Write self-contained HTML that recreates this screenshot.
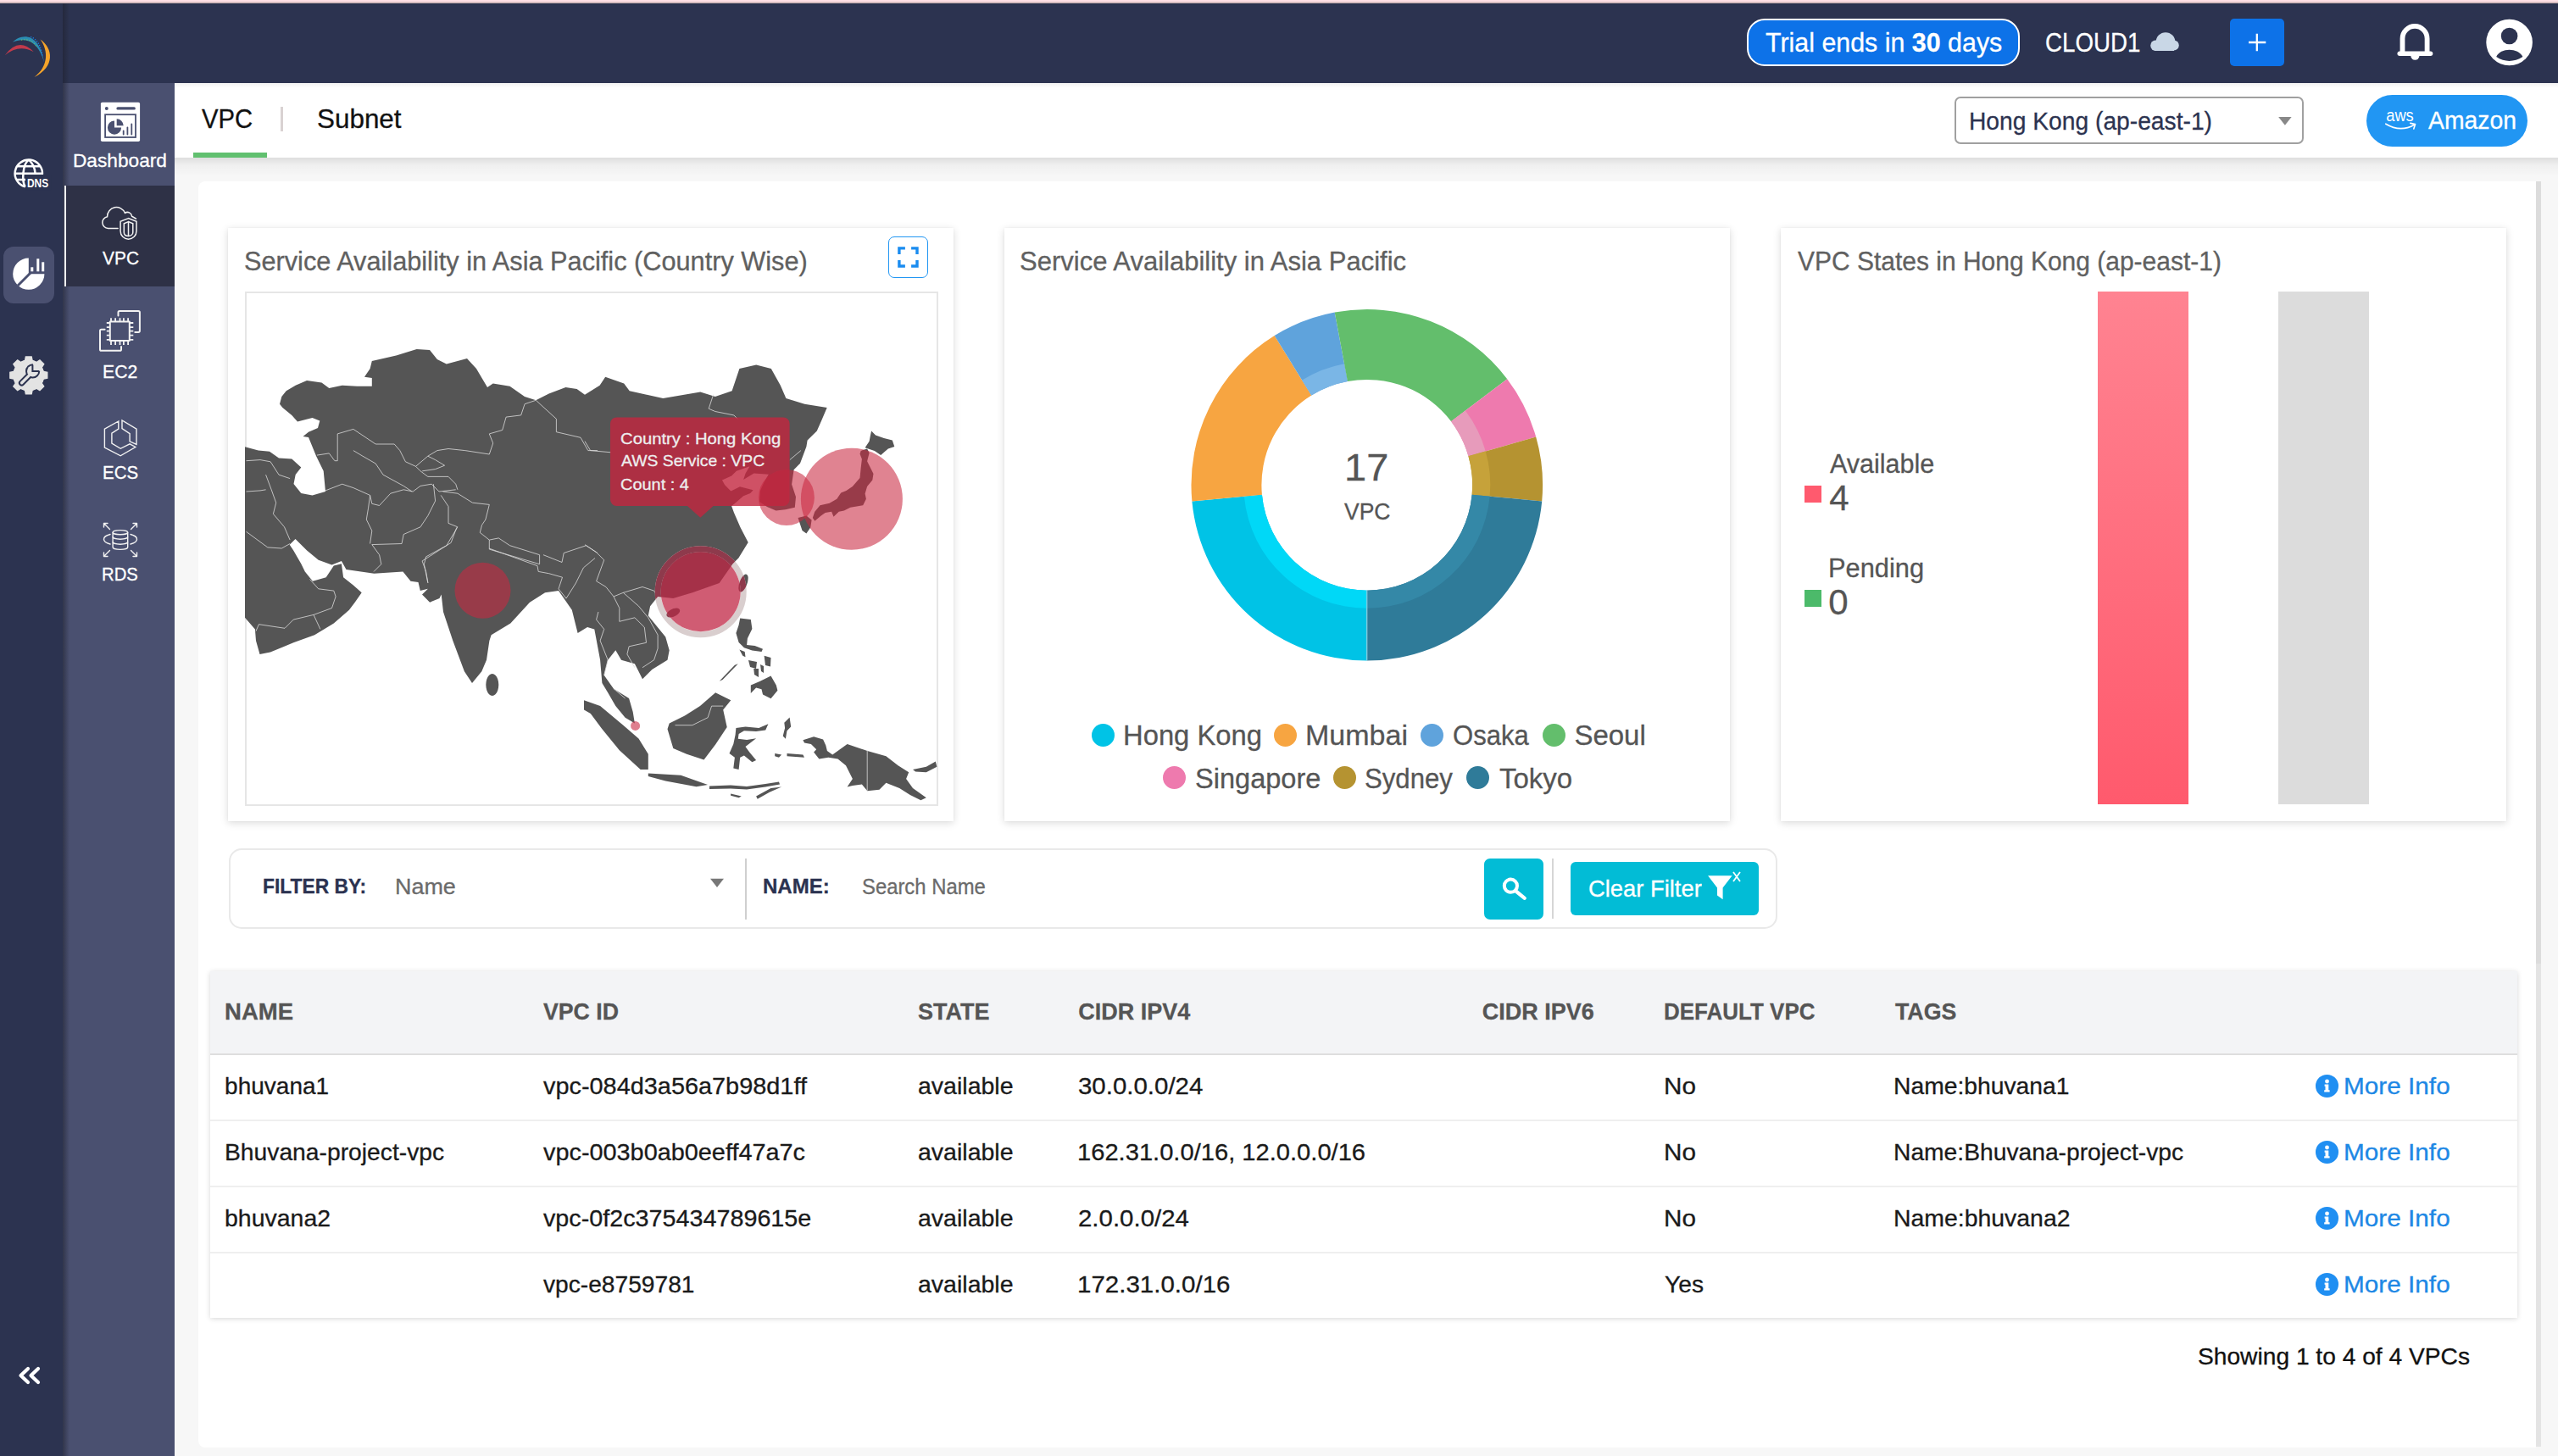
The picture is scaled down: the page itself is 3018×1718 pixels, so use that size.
<!DOCTYPE html>
<html><head><meta charset="utf-8"><style>
*{margin:0;padding:0;box-sizing:border-box}
html,body{width:3018px;height:1718px;overflow:hidden;background:#f7f7f7;font-family:"Liberation Sans",sans-serif}
.a{position:absolute}
.t{position:absolute;line-height:1;white-space:pre;font-family:"Liberation Sans",sans-serif;-webkit-text-stroke:0.3px currentColor}
svg{position:absolute;overflow:visible}
</style></head>
<body>
<div class="a" style="left:0px;top:0px;width:3018px;height:3px;background:#ffe0e6"></div><div class="a" style="left:0px;top:2px;width:3018px;height:2px;background:#d6bcc0"></div><div class="a" style="left:0px;top:4px;width:3018px;height:94px;background:#2c3350"></div><div class="a" style="left:0px;top:4px;width:3018px;height:1px;background:#222b45"></div><div class="a" style="left:0px;top:98px;width:74px;height:1620px;background:#2c3350"></div><div class="a" style="left:74px;top:98px;width:132px;height:1620px;background:#4a5070"></div><div class="a" style="left:74px;top:4px;width:8px;height:1714px;background:linear-gradient(to right,rgba(30,32,45,0.55),rgba(30,32,45,0))"></div><div class="a" style="left:76px;top:219px;width:130px;height:119px;background:#2e3146"></div><div class="a" style="left:76px;top:219px;width:2px;height:119px;background:#f0f0f0"></div><div class="a" style="left:4px;top:291px;width:60px;height:67px;background:#4a5070;border-radius:12px"></div><div class="a" style="left:206px;top:98px;width:2812px;height:88px;background:#fff"></div><div class="a" style="left:206px;top:186px;width:2812px;height:22px;background:linear-gradient(to bottom,rgba(0,0,0,0.10),rgba(0,0,0,0.03) 40%,rgba(0,0,0,0))"></div><div class="a" style="left:206px;top:98px;width:2812px;height:6px;background:linear-gradient(to bottom,rgba(0,0,0,0.05),rgba(0,0,0,0))"></div><div class="a" style="left:228px;top:180px;width:87px;height:6px;background:#61c06f"></div><div class="a" style="left:331px;top:126px;width:3px;height:29px;background:#d9d2d2"></div><div class="a" style="left:234px;top:214px;width:2758px;height:1494px;background:#fff;border-radius:8px 0 0 8px"></div><div class="a" style="left:2992px;top:214px;width:6px;height:923px;background:#dcdcdc"></div><div class="a" style="left:2992px;top:1137px;width:6px;height:570px;background:#e4e4e4"></div><div class="a" style="left:269px;top:269px;width:856px;height:700px;background:#fff;box-shadow:0 2px 9px rgba(0,0,0,0.15),0 0 2px rgba(0,0,0,0.05)"></div><div class="a" style="left:1185px;top:269px;width:856px;height:700px;background:#fff;box-shadow:0 2px 9px rgba(0,0,0,0.15),0 0 2px rgba(0,0,0,0.05)"></div><div class="a" style="left:2101px;top:269px;width:856px;height:700px;background:#fff;box-shadow:0 2px 9px rgba(0,0,0,0.15),0 0 2px rgba(0,0,0,0.05)"></div><div class="a" style="left:289px;top:344px;width:818px;height:607px;border:2px solid #e6e6e6"></div><div class="a" style="left:1048px;top:279px;width:47px;height:49px;border:1.5px solid #2196f3;border-radius:7px"></div><div class="a" style="left:2306px;top:114px;width:412px;height:56px;border:2px solid #a0a0a0;border-radius:7px;background:#fff"></div><div class="a" style="left:2792px;top:112px;width:190px;height:61px;background:#2196f3;border-radius:31px"></div><div class="a" style="left:2061px;top:22px;width:322px;height:56px;background:#0d72e8;border:2px solid #fff;border-radius:21px"></div><div class="a" style="left:2631px;top:22px;width:64px;height:56px;background:#0d72e8;border-radius:5px"></div><div class="a" style="left:270px;top:1001px;width:1827px;height:95px;border:2px solid #e9e9e9;border-radius:15px;background:#fff"></div><div class="a" style="left:879px;top:1013px;width:2px;height:72px;background:#cfcfcf"></div><div class="a" style="left:1831px;top:1013px;width:2px;height:71px;background:#d6d6d6"></div><div class="a" style="left:1751px;top:1013px;width:70px;height:72px;background:#02bcd6;border-radius:7px"></div><div class="a" style="left:1853px;top:1017px;width:222px;height:63px;background:#02bcd6;border-radius:6px"></div><div class="a" style="left:248px;top:1146px;width:2722px;height:409px;background:#fff;box-shadow:0 1px 6px rgba(0,0,0,0.16)"></div><div class="a" style="left:248px;top:1146px;width:2722px;height:97px;background:#f3f4f6"></div><div class="a" style="left:248px;top:1243px;width:2722px;height:2px;background:#dedede"></div><div class="a" style="left:248px;top:1321px;width:2722px;height:2px;background:#efefef"></div><div class="a" style="left:248px;top:1399px;width:2722px;height:2px;background:#efefef"></div><div class="a" style="left:248px;top:1477px;width:2722px;height:2px;background:#efefef"></div><svg style="left:0px;top:35px" width="70" height="65" viewBox="0 35 70 65">
<path d="M5.8,65.2 Q22,43 39.8,61.2 Q22,51.5 5.8,65.2 Z" fill="#c23a4b"/>
<path d="M14.8,49.8 C25,39.5 46,37 52.2,74 C44.5,45 27,44.5 14.8,49.8 Z" fill="#2b8db3"/>
<path d="M36,43.5 C44,46 48,54 50,66" fill="none" stroke="#1a7ee8" stroke-width="1.3" stroke-dasharray="1.3 1.6"/>
<path d="M25,47.2 Q37,45 43,55" fill="none" stroke="#8ad04a" stroke-width="1" stroke-dasharray="1.2 2"/>
<path d="M47.5,46.5 C63,57 65,79 40.5,91 C57,78.5 57.5,60 47.5,46.5 Z" fill="#f5a42a"/>
</svg><svg style="left:10px;top:180px" width="54" height="48" viewBox="10 180 54 48">
<g fill="none" stroke="#fff" stroke-width="2.5">
<path d="M29.8,220.4 A16.2,16.2 0 1 1 50,205.5"/>
<path d="M33.9,188.6 C26.5,194 25.5,214 29.8,220.4"/>
<path d="M33.9,188.6 C40,193.5 41.2,199 41.6,205"/>
<path d="M20.5,196.2 H47.4"/>
<path d="M17.8,204.8 H51"/>
<path d="M19,212 H30"/>
</g>
<rect x="30.8" y="206.2" width="30" height="18" fill="#2c3350"/>
<text x="32" y="221" font-family="Liberation Sans" font-weight="700" font-size="15.5" fill="#fff" textLength="25.2" lengthAdjust="spacingAndGlyphs">DNS</text>
</svg><svg style="left:10px;top:300px" width="50" height="50" viewBox="10 300 50 50">
<path d="M33.8,304.6 V323.2 H52.4 A18.6,18.6 0 1 1 33.8,304.6 Z" fill="#fff"/>
<path d="M21,337 L37,321" stroke="#4a5070" stroke-width="3"/>
<rect x="36.3" y="315.3" width="3" height="5" fill="#fff"/>
<rect x="43.3" y="305.3" width="3" height="15" fill="#fff"/>
<rect x="49.2" y="309.3" width="3" height="11" fill="#fff"/>
</svg><svg style="left:5px;top:412px" width="59" height="60" viewBox="5 412 59 60">
<path d="M51.63,437.87 L56.46,438.85 L56.46,446.75 L51.63,447.73 L49.90,451.92 L52.62,456.03 L47.03,461.62 L42.92,458.90 L38.73,460.63 L37.75,465.46 L29.85,465.46 L28.87,460.63 L24.68,458.90 L20.57,461.62 L14.98,456.03 L17.70,451.92 L15.97,447.73 L11.14,446.75 L11.14,438.85 L15.97,437.87 L17.70,433.68 L14.98,429.57 L20.57,423.98 L24.68,426.70 L28.87,424.97 L29.85,420.14 L37.75,420.14 L38.73,424.97 L42.92,426.70 L47.03,423.98 L52.62,429.57 L49.90,433.68 Z" fill="#e3e3e3"/>
<circle cx="33.8" cy="442.8" r="18.5" fill="#e3e3e3"/>
<path d="M25.6,451.8 L34,443.4" stroke="#2c3350" stroke-width="7.4" stroke-linecap="round"/>
<circle cx="38.6" cy="437.9" r="8.6" fill="#2c3350"/>
<path d="M25.6,451.8 L34,443.4" stroke="#e3e3e3" stroke-width="3.4" stroke-linecap="round"/>
<circle cx="38.6" cy="437.9" r="6.6" fill="#e3e3e3"/>
<path d="M38.9,437.6 V428 H49 V437.6 Z" fill="#e3e3e3"/>
<path d="M38.4,430.4 V438 H46" fill="none" stroke="#2c3350" stroke-width="2"/>
</svg><svg style="left:15px;top:1605px" width="40" height="35" viewBox="15 1605 40 35">
<path d="M33,1615 L24.5,1623 L33,1631 M45,1615 L36.5,1623 L45,1631" fill="none" stroke="#fff" stroke-width="4.2" stroke-linecap="round" stroke-linejoin="round"/>
</svg><svg style="left:110px;top:110px" width="65" height="65" viewBox="110 110 65 65">
<rect x="118.9" y="120.7" width="46.2" height="46.4" rx="1.8" fill="#fff"/>
<circle cx="125.8" cy="127.9" r="2" fill="#4a5070"/>
<path d="M139,127.9 H158.3" stroke="#4a5070" stroke-width="3.2" stroke-linecap="round"/>
<rect x="124.1" y="135.2" width="35.9" height="26.8" fill="none" stroke="#4a5070" stroke-width="1.8"/>
<path d="M135,142.5 V150.6 H143.1 A8.1,8.1 0 1 1 135,142.5 Z" fill="#4a5070"/>
<path d="M137.7,140.3 A8,8 0 0 1 145.7,148.3 H137.7 Z" fill="#4a5070"/>
<path d="M145.7,154.3 V158.5 M150.4,150.3 V158.5 M155.3,146.3 V158.5" stroke="#4a5070" stroke-width="1.8" stroke-linecap="round"/>
</svg><svg style="left:110px;top:235px" width="65" height="55" viewBox="110 235 65 55">
<g fill="none" stroke="#f2f2f2" stroke-width="1.5" stroke-linecap="round">
<path d="M139.1,269.4 H127.5 A6.9,6.9 0 0 1 126.6,255.7 A10.8,10.8 0 0 1 147.4,251.3 A5.3,5.3 0 0 1 155.6,255.2 L160.4,258"/>
<path d="M151.5,257.6 L142.1,261.2 V272.5 C142.1,278 146,282 151.5,282.2 C157,282 161,278 161,272.5 V261.2 Z"/>
<path d="M151.5,261.6 L146.3,263.8 V274.2 C146.3,276.8 148.6,278.4 151.5,278.4 C154.4,278.4 156.8,276.8 156.8,274.2 V263.8 Z"/>
<path d="M151.5,261.6 V278.4"/>
</g>
</svg><svg style="left:110px;top:358px" width="65" height="65" viewBox="110 358 65 65">
<g fill="none" stroke="#f2f2f2" stroke-width="2" stroke-linecap="round" stroke-linejoin="round">
<rect x="129.8" y="379.6" width="23" height="22.5"/>
<path d="M131,375.2 V379.4 M131,402.2 V407 M136.1,375.2 V379.4 M136.1,402.2 V407 M141.5,375.2 V379.4 M141.5,402.2 V407 M145.9,375.2 V379.4 M145.9,402.2 V407 M151.1,375.2 V379.4 M151.1,402.2 V407 M125.8,381 H129.6 M152.9,381 H157.3 M125.8,386.1 H129.6 M152.9,386.1 H157.3 M125.8,390.6 H129.6 M152.9,390.6 H157.3 M125.8,395.7 H129.6 M152.9,395.7 H157.3 M125.8,400.9 H129.6 M152.9,400.9 H157.3 " stroke-width="1.8" stroke-linecap="butt"/>
<path d="M139.5,372.5 V368.5 Q139.5,366.9 141,366.9 H163.3 Q164.9,366.9 164.9,368.5 V390.3 Q164.9,391.9 163.3,391.9 H159.3"/>
<path d="M123.6,388.8 H119.6 Q118,388.8 118,390.4 V412.2 Q118,413.8 119.6,413.8 H141.4 Q143,413.8 143,412.2 V409"/>
</g>
</svg><svg style="left:115px;top:490px" width="55" height="55" viewBox="115 490 55 55">
<g fill="none" stroke="#f2f2f2" stroke-width="1.4" stroke-linejoin="miter">
<path d="M139.8,497 L123.4,506.2 V528.1 L142.2,537.8 L159.8,527.5 L153.1,523.8 L142.2,529.3 L131.9,523.2 V511.1 L139.8,506.2 Z"/>
<path d="M144,495.9 V505.6 L153.1,511.7 V520.8 L161,524.5 V506.2 Z"/>
</g>
</svg><svg style="left:115px;top:610px" width="55" height="55" viewBox="115 610 55 55">
<g fill="none" stroke="#f2f2f2" stroke-width="1.4" stroke-linecap="round">
<ellipse cx="141.9" cy="628.2" rx="8.8" ry="2.6"/>
<path d="M133.1,628.2 V645.8 A8.8,2.6 0 0 0 150.7,645.8 V628.2"/>
<path d="M133.1,633.6 A8.8,2.6 0 0 0 150.7,633.6 M133.1,639.6 A8.8,2.6 0 0 0 150.7,639.6"/>
<path d="M130,630.5 C120,633 120,639.5 130,642 M154,630.5 C164,633 164,639.5 154,642"/>
<path d="M122.5,617.5 L129.5,624.5 M122.5,617.5 H127 M122.5,617.5 V622"/>
<path d="M161.5,617.5 L154.5,624.5 M161.5,617.5 H157 M161.5,617.5 V622"/>
<path d="M122.5,656.5 L129.5,649.5 M122.5,656.5 H127 M122.5,656.5 V652"/>
<path d="M161.5,656.5 L154.5,649.5 M161.5,656.5 H157 M161.5,656.5 V652"/>
</g>
</svg><svg style="left:2530px;top:30px" width="50" height="36" viewBox="2530 30 50 36">
<clipPath id="cc"><rect x="2530" y="30" width="50" height="30"/></clipPath>
<g fill="#c9d7e6" clip-path="url(#cc)">
<circle cx="2543.5" cy="53.8" r="6.3"/>
<circle cx="2555" cy="49.6" r="11.4"/>
<circle cx="2564.7" cy="53.5" r="6.1"/>
<rect x="2543" y="52" width="22" height="8"/>
</g>
</svg><svg style="left:2640px;top:30px" width="50" height="40" viewBox="2640 30 50 40">
<path d="M2653,50 H2673.3 M2662.8,39.8 V60.2" stroke="#fff" stroke-width="2.3"/>
</svg><svg style="left:2820px;top:25px" width="60" height="53" viewBox="2820 25 60 53">
<path d="M2834.5,62 V45.5 A14.3,14.3 0 0 1 2863.6,45.5 V62" fill="none" stroke="#fff" stroke-width="5.8"/>
<rect x="2828.5" y="60.5" width="41.8" height="5.4" rx="2.7" fill="#fff"/>
<path d="M2844.2,65.5 H2854.5 A5.1,5.1 0 0 1 2844.2,65.5 Z" fill="#fff"/>
</svg><svg style="left:2925px;top:15px" width="70" height="70" viewBox="2925 15 70 70">
<circle cx="2960.6" cy="50" r="27.3" fill="#fff"/>
<circle cx="2960.6" cy="42.5" r="9.8" fill="#2c3350"/>
<path d="M2945.2,67 C2950,56 2971,56 2976.4,67 C2966,73.5 2955,73.5 2945.2,67 Z" fill="#2c3350"/>
</svg><svg style="left:2680px;top:130px" width="30" height="25" viewBox="2680 130 30 25"><path d="M2688.2,137.9 H2703.6 L2695.9,147.8 Z" fill="#888"/></svg><svg style="left:2808px;top:125px" width="48" height="35" viewBox="2808 125 48 35">
<text x="2815.2" y="143.4" font-family="Liberation Sans" font-size="20.5" fill="#fff" textLength="32.6" lengthAdjust="spacingAndGlyphs">aws</text>
<path d="M2814.8,146.2 Q2832,156.5 2848.5,147.2" fill="none" stroke="#fff" stroke-width="1.7" stroke-linecap="round"/>
<path d="M2843.8,145.4 L2849.6,146.6 L2847.8,152" fill="none" stroke="#fff" stroke-width="1.6" stroke-linecap="round" stroke-linejoin="round"/>
</svg><svg style="left:1055px;top:288px" width="33" height="32" viewBox="1055 288 33 32">
<path d="M1060.9,299.9 V292.9 H1067.9 M1075.1,292.9 H1082 V299.9 M1060.9,307.1 V314 H1067.9 M1075.1,314 H1082 V307.1" fill="none" stroke="#1a8cf0" stroke-width="3.4"/>
</svg><svg style="left:830px;top:1030px" width="30" height="22" viewBox="830 1030 30 22"><path d="M838,1036.8 H854 L846,1047 Z" fill="#777"/></svg><svg style="left:1765px;top:1030px" width="43" height="38" viewBox="1765 1030 43 38">
<circle cx="1782.4" cy="1045.2" r="7.6" fill="none" stroke="#fff" stroke-width="4"/>
<path d="M1788.5,1051.5 L1798.8,1059.8" stroke="#fff" stroke-width="4.2" stroke-linecap="round"/>
</svg><svg style="left:2010px;top:1024px" width="50" height="42" viewBox="2010 1024 50 42">
<path d="M2015.1,1033.3 H2043.6 L2032.6,1047.5 V1061.2 L2026,1056.5 V1047.5 Z" fill="#fff"/>
<path d="M2045,1029 L2053,1040 M2053,1029 L2045,1040" stroke="#fff" stroke-width="1.8"/>
</svg><svg style="left:2728px;top:1264px" width="36" height="34" viewBox="2728 1264 36 34">
<circle cx="2745.5" cy="1281.4" r="13.5" fill="#208ff2"/>
<circle cx="2745.5" cy="1276.0" r="2.4" fill="#fff"/>
<path d="M2742.6,1279.6000000000001 H2747.3 V1286.2 H2748.6 V1288.4 H2742.2 V1286.2 H2743.5 V1281.7 H2742.6 Z" fill="#fff"/>
</svg><svg style="left:2728px;top:1342px" width="36" height="34" viewBox="2728 1342 36 34">
<circle cx="2745.5" cy="1359.4" r="13.5" fill="#208ff2"/>
<circle cx="2745.5" cy="1354.0" r="2.4" fill="#fff"/>
<path d="M2742.6,1357.6000000000001 H2747.3 V1364.2 H2748.6 V1366.4 H2742.2 V1364.2 H2743.5 V1359.7 H2742.6 Z" fill="#fff"/>
</svg><svg style="left:2728px;top:1420px" width="36" height="34" viewBox="2728 1420 36 34">
<circle cx="2745.5" cy="1437.4" r="13.5" fill="#208ff2"/>
<circle cx="2745.5" cy="1432.0" r="2.4" fill="#fff"/>
<path d="M2742.6,1435.6000000000001 H2747.3 V1442.2 H2748.6 V1444.4 H2742.2 V1442.2 H2743.5 V1437.7 H2742.6 Z" fill="#fff"/>
</svg><svg style="left:2728px;top:1498px" width="36" height="34" viewBox="2728 1498 36 34">
<circle cx="2745.5" cy="1515.4" r="13.5" fill="#208ff2"/>
<circle cx="2745.5" cy="1510.0" r="2.4" fill="#fff"/>
<path d="M2742.6,1513.6000000000001 H2747.3 V1520.2 H2748.6 V1522.4 H2742.2 V1520.2 H2743.5 V1515.7 H2742.6 Z" fill="#fff"/>
</svg><svg style="left:1400px;top:360px" width="430" height="430" viewBox="1400 360 430 430"><path d="M1612.80,779.60 A207.3,207.3 0 0 1 1406.38,591.43 L1488.93,583.78 A124.4,124.4 0 0 0 1612.80,696.70 Z" fill="#00c3e6"/><path d="M1612.80,717.80 A145.5,145.5 0 0 1 1467.92,585.73 L1488.93,583.78 A124.4,124.4 0 0 0 1612.80,696.70 Z" fill="#00d8f7"/><path d="M1406.38,591.43 A207.3,207.3 0 0 1 1503.67,396.05 L1547.31,466.53 A124.4,124.4 0 0 0 1488.93,583.78 Z" fill="#f7a541"/><path d="M1503.67,396.05 A207.3,207.3 0 0 1 1574.71,368.53 L1589.94,450.02 A124.4,124.4 0 0 0 1547.31,466.53 Z" fill="#5fa3dc"/><path d="M1536.20,448.59 A145.5,145.5 0 0 1 1586.06,429.28 L1589.94,450.02 A124.4,124.4 0 0 0 1547.31,466.53 Z" fill="#7ab6e6"/><path d="M1574.71,368.53 A207.3,207.3 0 0 1 1778.23,447.37 L1712.07,497.33 A124.4,124.4 0 0 0 1589.94,450.02 Z" fill="#63be6c"/><path d="M1778.23,447.37 A207.3,207.3 0 0 1 1812.19,515.57 L1732.45,538.26 A124.4,124.4 0 0 0 1712.07,497.33 Z" fill="#ee7aae"/><path d="M1728.91,484.62 A145.5,145.5 0 0 1 1752.75,532.48 L1732.45,538.26 A124.4,124.4 0 0 0 1712.07,497.33 Z" fill="#e79bbb"/><path d="M1812.19,515.57 A207.3,207.3 0 0 1 1819.22,591.43 L1736.67,583.78 A124.4,124.4 0 0 0 1732.45,538.26 Z" fill="#b59331"/><path d="M1752.75,532.48 A145.5,145.5 0 0 1 1757.68,585.73 L1736.67,583.78 A124.4,124.4 0 0 0 1732.45,538.26 Z" fill="#c6a23a"/><path d="M1819.22,591.43 A207.3,207.3 0 0 1 1612.80,779.60 L1612.80,696.70 A124.4,124.4 0 0 0 1736.67,583.78 Z" fill="#2f7b99"/><path d="M1757.68,585.73 A145.5,145.5 0 0 1 1612.80,717.80 L1612.80,696.70 A124.4,124.4 0 0 0 1736.67,583.78 Z" fill="#3488a7"/><path d="M1612.8,696.6999999999999 V779.5999999999999" stroke="#9fd6e6" stroke-width="1"/></svg><div class="a" style="left:1288.4px;top:854.2px;width:27px;height:27px;border-radius:50%;background:#00c3e6"></div><div class="a" style="left:1502.5px;top:854.2px;width:27px;height:27px;border-radius:50%;background:#f7a541"></div><div class="a" style="left:1675.5px;top:854.2px;width:27px;height:27px;border-radius:50%;background:#5fa3dc"></div><div class="a" style="left:1819.9px;top:854.2px;width:27px;height:27px;border-radius:50%;background:#63be6c"></div><div class="a" style="left:1372.1px;top:904.4px;width:27px;height:27px;border-radius:50%;background:#ee7aae"></div><div class="a" style="left:1572.7px;top:904.4px;width:27px;height:27px;border-radius:50%;background:#b59331"></div><div class="a" style="left:1729.5px;top:904.4px;width:27px;height:27px;border-radius:50%;background:#2f7b99"></div><div class="a" style="left:2475px;top:344px;width:107px;height:605px;background:linear-gradient(to bottom,#ff8391,#ff5a6d)"></div><div class="a" style="left:2688px;top:344px;width:107px;height:605px;background:#dcdcdc"></div><div class="a" style="left:2128.6px;top:573.4px;width:20.6px;height:20.1px;background:#ff5a6e"></div><div class="a" style="left:2128.6px;top:696.3px;width:20.6px;height:20px;background:#4cba6a"></div><svg style="left:291px;top:346px" width="814" height="603" viewBox="291 346 814 603">
<path d="M289.0,527.3 L304.8,531.6 L318.0,532.7 L329.0,540.4 L344.3,541.5 L355.3,551.4 L348.7,560.0 L346.5,571.0 L355.3,582.0 L368.5,584.4 L384.0,580.0 L381.7,555.8 L373.0,538.0 L364.0,516.0 L357.5,515.0 L364.0,509.7 L375.0,505.0 L377.3,496.5 L368.5,493.0 L351.0,497.6 L344.3,490.0 L333.4,481.0 L330.0,476.7 L332.3,468.0 L337.7,461.3 L348.7,454.7 L362.0,449.0 L379.5,451.4 L388.3,458.0 L403.7,454.7 L421.3,455.8 L438.8,455.8 L438.8,446.0 L430.0,444.8 L436.6,435.0 L438.8,426.0 L467.4,419.6 L491.6,411.9 L507.0,413.0 L515.8,424.0 L526.8,429.5 L551.0,422.9 L562.0,435.0 L575.0,457.0 L581.7,452.5 L601.5,455.8 L619.0,468.0 L632.3,472.3 L647.6,464.6 L667.4,457.0 L680.6,459.0 L690.0,465.7 L707.6,454.7 L714.2,444.8 L736.2,452.5 L742.7,461.3 L782.3,470.1 L826.3,462.4 L843.8,467.9 L863.6,461.3 L872.4,435.0 L892.2,430.5 L909.8,435.0 L920.8,454.7 L927.4,470.1 L949.3,476.7 L975.7,481.1 L969.1,496.5 L963.8,508.4 L952.6,519.6 L951.4,527.0 L944.0,546.8 L936.6,554.2 L934.1,571.5 L939.0,586.3 L937.8,598.7 L926.7,601.2 L915.5,602.4 L905.0,598.0 L896.0,592.0 L897.0,579.0 L902.0,568.0 L906.8,559.8 L889.5,558.5 L877.1,566.0 L879.6,558.5 L884.5,550.3 L868.9,555.7 L863.1,561.4 L852.0,566.4 L855.0,572.0 L862.3,579.6 L873.0,574.2 L888.6,578.3 L885.3,582.0 L877.1,585.3 L866.4,594.4 L863.1,597.0 L866.0,605.0 L873.5,622.2 L882.7,640.0 L871.3,658.5 L864.5,665.3 L848.7,688.0 L816.9,699.3 L794.3,706.1 L776.1,703.9 L767.1,715.2 L764.8,726.5 L785.2,751.5 L789.7,767.3 L787.5,778.7 L769.3,790.0 L758.0,801.3 L753.5,792.3 L748.9,783.2 L733.0,778.7 L726.3,767.3 L717.2,778.7 L712.7,796.8 L724.0,812.7 L742.1,824.0 L746.7,839.9 L748.9,853.5 L737.6,846.7 L726.3,833.0 L717.2,817.2 L710.4,805.9 L708.1,778.7 L701.3,742.4 L693.0,740.1 L681.6,746.9 L674.8,719.7 L659.0,697.1 L643.1,699.3 L625.0,710.7 L602.3,735.6 L579.6,749.2 L577.4,756.0 L574.0,778.7 L568.3,792.3 L557.0,805.9 L547.9,792.3 L534.3,756.0 L523.0,722.0 L520.7,701.6 L518.5,706.1 L507.1,710.7 L498.0,701.6 L504.9,694.8 L495.8,697.1 L493.5,686.9 L484.5,685.7 L475.4,674.4 L441.4,676.7 L408.5,672.1 L402.9,661.9 L391.5,666.5 L375.7,660.8 L362.1,649.5 L348.5,635.9 L341.7,642.7 L346.2,649.5 L355.3,665.3 L359.8,674.4 L368.9,685.7 L384.7,681.2 L393.8,667.6 L402.9,665.3 L405.1,681.2 L416.5,690.3 L426.7,699.3 L418.7,710.7 L411.9,719.7 L393.8,735.6 L371.1,749.2 L346.2,758.3 L319.0,769.6 L306.5,771.9 L302.0,756.0 L300.9,742.4 L289.0,728.8 Z M1015.7,531.9 L1023.1,529.5 L1025.6,534.4 L1023.1,544.3 L1028.1,554.2 L1030.5,559.1 L1029.3,566.6 L1023.1,574.0 L1020.6,582.6 L1021.9,588.8 L1018.2,596.2 L1010.8,597.5 L1003.3,598.7 L995.9,602.4 L989.7,603.7 L983.5,609.8 L981.1,603.7 L973.7,604.9 L968.7,608.6 L961.3,614.8 L958.8,611.1 L961.3,603.7 L967.5,596.2 L978.6,593.8 L987.3,588.8 L992.2,581.4 L998.4,578.9 L1005.8,574.0 L1014.5,564.1 L1015.7,551.7 L1016.9,541.8 L1014.5,535.6 Z M1028.1,508.4 L1033.0,513.4 L1042.9,517.1 L1052.8,519.6 L1055.3,527.0 L1047.8,529.5 L1039.2,536.9 L1031.8,532.0 L1020.6,528.2 L1025.6,520.8 L1026.8,514.6 Z M941.5,611.1 L951.4,608.6 L957.6,613.5 L956.3,622.2 L951.4,629.6 L946.5,625.9 L944.0,618.5 Z M689.0,826.3 L708.1,833.0 L735.3,855.7 L753.5,871.6 L764.8,889.7 L764.8,907.9 L755.7,907.9 L730.8,885.2 L710.4,860.3 L696.8,842.1 L689.0,837.6 Z M789.7,853.5 L807.9,844.4 L826.0,833.0 L844.1,817.2 L862.3,826.3 L853.2,837.6 L857.7,858.0 L844.1,878.4 L830.5,896.5 L810.1,889.7 L794.3,882.9 L787.5,860.3 Z M868.4,859.0 L879.5,857.4 L895.3,859.0 L906.4,854.3 L903.2,861.4 L892.1,863.0 L877.9,862.2 L871.6,866.1 L870.8,871.7 L881.1,872.9 L892.1,871.3 L879.5,881.1 L884.2,887.5 L892.1,896.9 L887.4,899.3 L877.9,891.4 L873.2,893.8 L871.6,908.0 L865.3,906.4 L866.9,893.8 L860.5,889.0 L865.3,878.0 L867.6,866.9 Z M764.8,912.4 L803.3,914.7 L835.0,926.0 L821.5,928.3 L785.2,921.5 L764.8,916.0 Z M837.0,927.5 L862.0,926.5 L881.0,928.0 L903.0,925.0 L919.0,922.5 L920.0,925.5 L903.0,928.5 L881.0,931.5 L862.0,930.5 L837.0,931.0 Z M947.4,873.2 L960.1,869.3 L971.1,872.4 L974.3,879.6 L975.9,885.9 L982.2,890.6 L999.6,878.0 L1023.3,885.9 L1045.4,892.2 L1059.6,903.3 L1072.2,911.2 L1069.1,919.1 L1077.0,930.1 L1092.8,941.2 L1086.4,944.3 L1073.8,938.0 L1061.2,930.1 L1045.4,923.8 L1037.5,931.7 L1023.3,933.3 L1016.9,925.4 L1005.9,927.0 L999.6,928.5 L1005.9,919.1 L998.0,903.3 L988.5,895.4 L977.4,893.8 L966.4,895.4 L960.1,887.5 L963.2,884.3 L956.9,878.0 L949.0,876.4 Z M1077.0,908.0 L1092.8,904.8 L1103.8,898.5 L1105.4,904.8 L1092.8,911.2 L1080.1,910.4 Z M873.2,729.5 L885.8,731.1 L887.4,742.1 L881.9,753.2 L881.1,761.1 L890.6,761.9 L900.0,765.8 L898.5,769.0 L887.4,767.4 L877.9,764.2 L871.6,757.9 L868.4,746.9 L871.6,737.4 Z M872.4,766.6 L878.7,769.0 L879.5,775.3 L876.3,773.7 Z M885.8,808.5 L896.9,803.7 L909.5,797.4 L915.8,808.5 L917.4,814.8 L909.5,824.3 L900.0,819.5 L898.5,813.2 L892.1,811.6 L885.8,817.9 Z M883.0,779.0 L893.0,781.0 L892.0,789.0 L885.0,787.0 Z M889.0,787.0 L895.0,789.0 L895.0,799.0 L890.0,796.0 Z M901.6,773.7 L909.5,776.0 L909.0,786.4 L903.0,785.0 Z M897.0,784.0 L901.0,786.0 L901.0,794.0 L898.0,792.0 Z M848.7,803.7 L866.9,784.8 L870.8,783.2 L852.6,802.1 Z M931.6,846.4 L933.2,857.4 L928.5,862.2 L926.9,871.7 L923.7,868.5 L926.1,859.0 L925.3,852.7 Z M928.5,889.0 L947.4,890.6 L949.0,893.8 L928.5,892.2 Z M914.2,889.0 L922.1,890.6 L919.0,893.8 L914.2,892.2 Z M892.1,939.6 L909.5,930.1 L922.1,928.5 L907.9,934.8 L893.7,942.7 Z M862.1,936.4 L874.8,939.6 L871.6,941.2 L862.1,938.8 Z M881.2,689.5 L880.1,692.2 L878.8,694.5 L877.3,696.4 L875.9,697.7 L874.5,698.4 L873.2,698.3 L872.3,697.6 L871.6,696.2 L871.3,694.2 L871.5,691.8 L871.9,689.2 L872.8,686.5 L873.9,683.8 L875.2,681.5 L876.7,679.6 L878.1,678.3 L879.5,677.6 L880.8,677.7 L881.7,678.4 L882.4,679.8 L882.7,681.8 L882.5,684.2 L882.1,686.8 Z M588.3,808.0 L588.0,811.4 L587.3,814.5 L586.1,817.2 L584.5,819.3 L582.7,820.6 L580.8,821.0 L578.9,820.6 L577.0,819.3 L575.5,817.2 L574.3,814.5 L573.6,811.4 L573.3,808.0 L573.6,804.6 L574.3,801.5 L575.5,798.8 L577.0,796.7 L578.9,795.4 L580.8,795.0 L582.7,795.4 L584.5,796.7 L586.1,798.8 L587.3,801.5 L588.0,804.6 Z M802.0,719.4 L802.2,720.6 L801.9,721.9 L801.1,723.3 L799.8,724.7 L798.1,726.0 L796.2,727.1 L794.1,727.9 L792.1,728.3 L790.2,728.4 L788.6,728.2 L787.4,727.5 L786.6,726.6 L786.4,725.4 L786.7,724.1 L787.5,722.7 L788.8,721.3 L790.5,720.0 L792.4,718.9 L794.5,718.1 L796.5,717.7 L798.4,717.6 L800.0,717.8 L801.2,718.5 Z" fill="#555555"/>
<path d="M374.0,537.1 L388.3,534.9 L394.9,543.7 L398.2,543.7 L398.2,511.9 L416.9,506.4 L443.2,524.0 L465.2,524.0 L471.8,531.6 L478.4,544.8 L490.5,550.3 L504.8,538.2 L515.8,531.6 L529.0,529.5 L548.7,531.6 L577.3,536.0 L581.7,522.9 L577.3,511.9 L592.7,507.5 L597.1,492.1 L614.7,489.9 L619.1,476.7 L632.3,472.3 M632.3,472.3 L656.4,494.3 L656.4,509.7 L685.0,516.3 L693.8,531.6 L705.0,531.6 M383.9,578.9 L403.7,571.2 L416.9,575.6 L436.6,584.4 L438.8,594.3 L447.6,596.5 L460.8,582.2 L476.2,577.8 L487.2,580.0 L496.0,573.4 L509.2,571.2 L518.0,580.0 L537.7,577.8 M416.9,531.6 L427.9,538.2 L443.2,547.0 L452.0,560.2 L476.2,573.4 L486.1,580.0 M490.5,550.3 L496.0,555.8 L504.8,562.4 L529.0,562.4 L537.7,571.2 L539.9,577.8 M504.8,538.2 L513.6,542.6 L524.6,549.2 L513.6,553.6 L498.2,555.8 M313.6,560.2 L320.2,577.8 L325.7,593.2 L322.4,606.4 L335.5,621.8 L342.1,637.1 M436.6,584.4 L434.5,599.8 L432.3,613.0 L438.8,626.2 L436.6,641.5 M511.4,571.2 L513.6,591.0 L504.8,608.6 L496.0,621.8 L476.2,630.5 L474.0,641.5 L438.8,642.6 M438.8,642.6 L447.6,654.7 L449.8,665.7 L441.0,674.5 M520.2,584.4 L529.0,597.6 L529.0,617.4 L539.9,621.8 L526.8,643.7 L502.6,656.9 L500.4,665.7 L504.8,687.7 M522.4,580.0 L539.9,582.2 L557.5,593.2 L577.3,595.4 L572.9,613.0 L568.5,619.6 L566.3,628.4 L577.3,637.1 L588.3,634.9 M577.3,637.1 L577.3,648.1 L636.6,665.7 L636.6,654.7 L601.5,643.7 L588.3,634.9 M641.0,654.7 L663.0,663.5 L665.2,652.5 L691.6,643.7 L705.0,652.5 M290.5,543.7 L307.0,542.6 L319.1,544.8 L329.0,560.2 L342.1,564.6 M290.5,580.0 L307.0,578.9 L313.6,577.8 M290.5,627.3 L315.8,645.9 L332.3,647.0 L342.1,641.5 M365.5,683.5 L375.7,694.8 L393.8,697.1 L396.1,703.9 L391.5,717.5 L370.0,725.4 L346.2,731.1 L336.0,741.3 L305.4,736.7 L302.0,744.7 M370.0,725.4 L377.9,742.4 M577.4,647.2 L634.0,667.6 L635.2,674.4 L647.6,676.7 L663.5,681.2 L659.0,694.8 L668.0,706.1 L679.4,688.0 L688.4,669.9 L702.0,658.5 M504.9,687.8 L502.6,674.4 L498.1,661.9 L507.1,656.3 L532.1,640.4 L538.9,622.3 M690.0,642.7 L703.6,651.7 L712.7,660.8 L703.6,685.7 L714.9,692.5 L724.0,703.9 L735.3,699.3 L758.0,692.5 L771.6,697.1 L776.1,703.9 M705.9,722.0 L703.6,731.1 L712.7,742.4 L708.1,756.0 L717.2,778.7 L712.7,796.8 M724.0,703.9 L730.8,717.5 L730.8,733.3 L748.9,728.8 L760.3,740.1 L762.5,758.3 L742.1,762.8 L739.9,771.9 L748.9,787.7 M735.3,699.3 L753.5,715.2 L764.8,728.8 L776.1,749.2 L776.1,765.1 L771.6,778.7 L758.0,787.7 M724.0,812.7 L737.6,824.0 M796.5,855.7 L816.9,855.7 L835.1,846.7 L839.6,833.1 L853.2,833.1 M1023.2,885.2 L1023.2,932.8 M690.0,520.7 L696.6,531.6 L720.8,533.8 M841.6,465.7 L836.2,482.2 L843.8,485.5 L865.8,489.9 L870.2,494.3 M931.8,542.6 L944.9,531.6" fill="none" stroke="#dcdcdc" stroke-width="0.8"/>
<circle cx="569.5" cy="696.7" r="33" fill="rgba(202,41,66,0.58)"/>
<circle cx="927.9" cy="587" r="33" fill="rgba(202,41,66,0.58)"/>
<circle cx="1004.9" cy="588.8" r="60" fill="rgba(202,41,66,0.58)"/>
<circle cx="749.6" cy="856.4" r="5.5" fill="rgba(202,41,66,0.6)"/>
<clipPath id="lc"><path d="M289.0,527.3 L304.8,531.6 L318.0,532.7 L329.0,540.4 L344.3,541.5 L355.3,551.4 L348.7,560.0 L346.5,571.0 L355.3,582.0 L368.5,584.4 L384.0,580.0 L381.7,555.8 L373.0,538.0 L364.0,516.0 L357.5,515.0 L364.0,509.7 L375.0,505.0 L377.3,496.5 L368.5,493.0 L351.0,497.6 L344.3,490.0 L333.4,481.0 L330.0,476.7 L332.3,468.0 L337.7,461.3 L348.7,454.7 L362.0,449.0 L379.5,451.4 L388.3,458.0 L403.7,454.7 L421.3,455.8 L438.8,455.8 L438.8,446.0 L430.0,444.8 L436.6,435.0 L438.8,426.0 L467.4,419.6 L491.6,411.9 L507.0,413.0 L515.8,424.0 L526.8,429.5 L551.0,422.9 L562.0,435.0 L575.0,457.0 L581.7,452.5 L601.5,455.8 L619.0,468.0 L632.3,472.3 L647.6,464.6 L667.4,457.0 L680.6,459.0 L690.0,465.7 L707.6,454.7 L714.2,444.8 L736.2,452.5 L742.7,461.3 L782.3,470.1 L826.3,462.4 L843.8,467.9 L863.6,461.3 L872.4,435.0 L892.2,430.5 L909.8,435.0 L920.8,454.7 L927.4,470.1 L949.3,476.7 L975.7,481.1 L969.1,496.5 L963.8,508.4 L952.6,519.6 L951.4,527.0 L944.0,546.8 L936.6,554.2 L934.1,571.5 L939.0,586.3 L937.8,598.7 L926.7,601.2 L915.5,602.4 L905.0,598.0 L896.0,592.0 L897.0,579.0 L902.0,568.0 L906.8,559.8 L889.5,558.5 L877.1,566.0 L879.6,558.5 L884.5,550.3 L868.9,555.7 L863.1,561.4 L852.0,566.4 L855.0,572.0 L862.3,579.6 L873.0,574.2 L888.6,578.3 L885.3,582.0 L877.1,585.3 L866.4,594.4 L863.1,597.0 L866.0,605.0 L873.5,622.2 L882.7,640.0 L871.3,658.5 L864.5,665.3 L848.7,688.0 L816.9,699.3 L794.3,706.1 L776.1,703.9 L767.1,715.2 L764.8,726.5 L785.2,751.5 L789.7,767.3 L787.5,778.7 L769.3,790.0 L758.0,801.3 L753.5,792.3 L748.9,783.2 L733.0,778.7 L726.3,767.3 L717.2,778.7 L712.7,796.8 L724.0,812.7 L742.1,824.0 L746.7,839.9 L748.9,853.5 L737.6,846.7 L726.3,833.0 L717.2,817.2 L710.4,805.9 L708.1,778.7 L701.3,742.4 L693.0,740.1 L681.6,746.9 L674.8,719.7 L659.0,697.1 L643.1,699.3 L625.0,710.7 L602.3,735.6 L579.6,749.2 L577.4,756.0 L574.0,778.7 L568.3,792.3 L557.0,805.9 L547.9,792.3 L534.3,756.0 L523.0,722.0 L520.7,701.6 L518.5,706.1 L507.1,710.7 L498.0,701.6 L504.9,694.8 L495.8,697.1 L493.5,686.9 L484.5,685.7 L475.4,674.4 L441.4,676.7 L408.5,672.1 L402.9,661.9 L391.5,666.5 L375.7,660.8 L362.1,649.5 L348.5,635.9 L341.7,642.7 L346.2,649.5 L355.3,665.3 L359.8,674.4 L368.9,685.7 L384.7,681.2 L393.8,667.6 L402.9,665.3 L405.1,681.2 L416.5,690.3 L426.7,699.3 L418.7,710.7 L411.9,719.7 L393.8,735.6 L371.1,749.2 L346.2,758.3 L319.0,769.6 L306.5,771.9 L302.0,756.0 L300.9,742.4 L289.0,728.8 Z M1015.7,531.9 L1023.1,529.5 L1025.6,534.4 L1023.1,544.3 L1028.1,554.2 L1030.5,559.1 L1029.3,566.6 L1023.1,574.0 L1020.6,582.6 L1021.9,588.8 L1018.2,596.2 L1010.8,597.5 L1003.3,598.7 L995.9,602.4 L989.7,603.7 L983.5,609.8 L981.1,603.7 L973.7,604.9 L968.7,608.6 L961.3,614.8 L958.8,611.1 L961.3,603.7 L967.5,596.2 L978.6,593.8 L987.3,588.8 L992.2,581.4 L998.4,578.9 L1005.8,574.0 L1014.5,564.1 L1015.7,551.7 L1016.9,541.8 L1014.5,535.6 Z M1028.1,508.4 L1033.0,513.4 L1042.9,517.1 L1052.8,519.6 L1055.3,527.0 L1047.8,529.5 L1039.2,536.9 L1031.8,532.0 L1020.6,528.2 L1025.6,520.8 L1026.8,514.6 Z M941.5,611.1 L951.4,608.6 L957.6,613.5 L956.3,622.2 L951.4,629.6 L946.5,625.9 L944.0,618.5 Z M689.0,826.3 L708.1,833.0 L735.3,855.7 L753.5,871.6 L764.8,889.7 L764.8,907.9 L755.7,907.9 L730.8,885.2 L710.4,860.3 L696.8,842.1 L689.0,837.6 Z M789.7,853.5 L807.9,844.4 L826.0,833.0 L844.1,817.2 L862.3,826.3 L853.2,837.6 L857.7,858.0 L844.1,878.4 L830.5,896.5 L810.1,889.7 L794.3,882.9 L787.5,860.3 Z M868.4,859.0 L879.5,857.4 L895.3,859.0 L906.4,854.3 L903.2,861.4 L892.1,863.0 L877.9,862.2 L871.6,866.1 L870.8,871.7 L881.1,872.9 L892.1,871.3 L879.5,881.1 L884.2,887.5 L892.1,896.9 L887.4,899.3 L877.9,891.4 L873.2,893.8 L871.6,908.0 L865.3,906.4 L866.9,893.8 L860.5,889.0 L865.3,878.0 L867.6,866.9 Z M764.8,912.4 L803.3,914.7 L835.0,926.0 L821.5,928.3 L785.2,921.5 L764.8,916.0 Z M837.0,927.5 L862.0,926.5 L881.0,928.0 L903.0,925.0 L919.0,922.5 L920.0,925.5 L903.0,928.5 L881.0,931.5 L862.0,930.5 L837.0,931.0 Z M947.4,873.2 L960.1,869.3 L971.1,872.4 L974.3,879.6 L975.9,885.9 L982.2,890.6 L999.6,878.0 L1023.3,885.9 L1045.4,892.2 L1059.6,903.3 L1072.2,911.2 L1069.1,919.1 L1077.0,930.1 L1092.8,941.2 L1086.4,944.3 L1073.8,938.0 L1061.2,930.1 L1045.4,923.8 L1037.5,931.7 L1023.3,933.3 L1016.9,925.4 L1005.9,927.0 L999.6,928.5 L1005.9,919.1 L998.0,903.3 L988.5,895.4 L977.4,893.8 L966.4,895.4 L960.1,887.5 L963.2,884.3 L956.9,878.0 L949.0,876.4 Z M1077.0,908.0 L1092.8,904.8 L1103.8,898.5 L1105.4,904.8 L1092.8,911.2 L1080.1,910.4 Z M873.2,729.5 L885.8,731.1 L887.4,742.1 L881.9,753.2 L881.1,761.1 L890.6,761.9 L900.0,765.8 L898.5,769.0 L887.4,767.4 L877.9,764.2 L871.6,757.9 L868.4,746.9 L871.6,737.4 Z M872.4,766.6 L878.7,769.0 L879.5,775.3 L876.3,773.7 Z M885.8,808.5 L896.9,803.7 L909.5,797.4 L915.8,808.5 L917.4,814.8 L909.5,824.3 L900.0,819.5 L898.5,813.2 L892.1,811.6 L885.8,817.9 Z M883.0,779.0 L893.0,781.0 L892.0,789.0 L885.0,787.0 Z M889.0,787.0 L895.0,789.0 L895.0,799.0 L890.0,796.0 Z M901.6,773.7 L909.5,776.0 L909.0,786.4 L903.0,785.0 Z M897.0,784.0 L901.0,786.0 L901.0,794.0 L898.0,792.0 Z M848.7,803.7 L866.9,784.8 L870.8,783.2 L852.6,802.1 Z M931.6,846.4 L933.2,857.4 L928.5,862.2 L926.9,871.7 L923.7,868.5 L926.1,859.0 L925.3,852.7 Z M928.5,889.0 L947.4,890.6 L949.0,893.8 L928.5,892.2 Z M914.2,889.0 L922.1,890.6 L919.0,893.8 L914.2,892.2 Z M892.1,939.6 L909.5,930.1 L922.1,928.5 L907.9,934.8 L893.7,942.7 Z M862.1,936.4 L874.8,939.6 L871.6,941.2 L862.1,938.8 Z M881.2,689.5 L880.1,692.2 L878.8,694.5 L877.3,696.4 L875.9,697.7 L874.5,698.4 L873.2,698.3 L872.3,697.6 L871.6,696.2 L871.3,694.2 L871.5,691.8 L871.9,689.2 L872.8,686.5 L873.9,683.8 L875.2,681.5 L876.7,679.6 L878.1,678.3 L879.5,677.6 L880.8,677.7 L881.7,678.4 L882.4,679.8 L882.7,681.8 L882.5,684.2 L882.1,686.8 Z M588.3,808.0 L588.0,811.4 L587.3,814.5 L586.1,817.2 L584.5,819.3 L582.7,820.6 L580.8,821.0 L578.9,820.6 L577.0,819.3 L575.5,817.2 L574.3,814.5 L573.6,811.4 L573.3,808.0 L573.6,804.6 L574.3,801.5 L575.5,798.8 L577.0,796.7 L578.9,795.4 L580.8,795.0 L582.7,795.4 L584.5,796.7 L586.1,798.8 L587.3,801.5 L588.0,804.6 Z M802.0,719.4 L802.2,720.6 L801.9,721.9 L801.1,723.3 L799.8,724.7 L798.1,726.0 L796.2,727.1 L794.1,727.9 L792.1,728.3 L790.2,728.4 L788.6,728.2 L787.4,727.5 L786.6,726.6 L786.4,725.4 L786.7,724.1 L787.5,722.7 L788.8,721.3 L790.5,720.0 L792.4,718.9 L794.5,718.1 L796.5,717.7 L798.4,717.6 L800.0,717.8 L801.2,718.5 Z"/></clipPath>
<circle cx="826.7" cy="698.2" r="50.5" fill="none" stroke="#d9cece" stroke-width="7"/>
<circle cx="826.7" cy="698.2" r="50.5" fill="none" stroke="#8e3a4c" stroke-width="7" clip-path="url(#lc)"/>
<circle cx="826.7" cy="698.2" r="47" fill="rgba(192,37,68,0.75)"/>
<path d="M727.4,492.4 H924.2 A7.4,7.4 0 0 1 931.6,499.8 V589.5 A7.4,7.4 0 0 1 924.2,596.9 H841.6 L826.3,610.8 L810.9,596.9 H727.4 A7.4,7.4 0 0 1 720,589.5 V499.8 A7.4,7.4 0 0 1 727.4,492.4 Z" fill="rgba(195,38,62,0.8)"/>
</svg>
<div class="t" style="left:85.5px;top:178.5px;font-size:22.5px;color:#fff;transform:scaleX(1.0075);transform-origin:0 0;">Dashboard</div>
<div class="t" style="left:121.0px;top:294.0px;font-size:22.5px;color:#fff;transform:scaleX(0.9289);transform-origin:0 0;">VPC</div>
<div class="t" style="left:120.7px;top:428.0px;font-size:22.5px;color:#fff;transform:scaleX(0.9415);transform-origin:0 0;">EC2</div>
<div class="t" style="left:120.8px;top:547.0px;font-size:22.5px;color:#fff;transform:scaleX(0.9116);transform-origin:0 0;">ECS</div>
<div class="t" style="left:119.8px;top:667.0px;font-size:22.5px;color:#fff;transform:scaleX(0.9022);transform-origin:0 0;">RDS</div>
<div class="t" style="left:2082.8px;top:33.9px;font-size:32px;color:#fff;transform:scaleX(0.9497);transform-origin:0 0;">Trial ends in <b>30</b> days</div>
<div class="t" style="left:2413.3px;top:33.9px;font-size:32px;color:#fff;transform:scaleX(0.8651);transform-origin:0 0;">CLOUD1</div>
<div class="t" style="left:2323.1px;top:127.6px;font-size:30px;color:#2c3350;transform:scaleX(0.9404);transform-origin:0 0;">Hong Kong (ap-east-1)</div>
<div class="t" style="left:2865.0px;top:126.6px;font-size:30px;color:#fff;transform:scaleX(0.9444);transform-origin:0 0;">Amazon</div>
<div class="t" style="left:238.3px;top:123.9px;font-size:32px;color:#111;transform:scaleX(0.9138);transform-origin:0 0;">VPC</div>
<div class="t" style="left:374.4px;top:123.9px;font-size:32px;color:#111;transform:scaleX(0.9818);transform-origin:0 0;">Subnet</div>
<div class="t" style="left:288.0px;top:292.5px;font-size:31px;color:#606060;transform:scaleX(0.9901);transform-origin:0 0;">Service Availability in Asia Pacific (Country Wise)</div>
<div class="t" style="left:1203.0px;top:292.8px;font-size:31px;color:#606060;">Service Availability in Asia Pacific</div>
<div class="t" style="left:2121.0px;top:292.8px;font-size:31px;color:#606060;transform:scaleX(0.9670);transform-origin:0 0;">VPC States in Hong Kong (ap-east-1)</div>
<div class="t" style="left:731.8px;top:507.9px;font-size:19px;color:#eeeeee;transform:scaleX(1.0674);transform-origin:0 0;">Country : Hong Kong</div>
<div class="t" style="left:732.9px;top:534.2px;font-size:19px;color:#eeeeee;transform:scaleX(1.0182);transform-origin:0 0;">AWS Service : VPC</div>
<div class="t" style="left:731.9px;top:561.7px;font-size:19px;color:#eeeeee;transform:scaleX(1.0500);transform-origin:0 0;">Count : 4</div>
<div class="t" style="left:1586.1px;top:528.6px;font-size:45px;color:#555;transform:scaleX(1.0444);transform-origin:0 0;">17</div>
<div class="t" style="left:1586.2px;top:591.1px;font-size:27px;color:#555;transform:scaleX(0.9815);transform-origin:0 0;">VPC</div>
<div class="t" style="left:1325.0px;top:851.4px;font-size:33px;color:#555;transform:scaleX(0.9931);transform-origin:0 0;">Hong Kong</div>
<div class="t" style="left:1540.4px;top:851.4px;font-size:33px;color:#555;transform:scaleX(1.0304);transform-origin:0 0;">Mumbai</div>
<div class="t" style="left:1714.1px;top:851.4px;font-size:33px;color:#555;transform:scaleX(0.9400);transform-origin:0 0;">Osaka</div>
<div class="t" style="left:1857.4px;top:851.4px;font-size:33px;color:#555;">Seoul</div>
<div class="t" style="left:1410.0px;top:901.5px;font-size:33px;color:#555;transform:scaleX(0.9864);transform-origin:0 0;">Singapore</div>
<div class="t" style="left:1610.1px;top:901.5px;font-size:33px;color:#555;transform:scaleX(0.9444);transform-origin:0 0;">Sydney</div>
<div class="t" style="left:1769.0px;top:901.5px;font-size:33px;color:#555;">Tokyo</div>
<div class="t" style="left:2159.2px;top:532.2px;font-size:31px;color:#555;transform:scaleX(0.9839);transform-origin:0 0;">Available</div>
<div class="t" style="left:2158.2px;top:566.9px;font-size:42px;color:#555;">4</div>
<div class="t" style="left:2157.2px;top:655.0px;font-size:31px;color:#555;transform:scaleX(0.9936);transform-origin:0 0;">Pending</div>
<div class="t" style="left:2157.2px;top:689.7px;font-size:42px;color:#555;">0</div>
<div class="t" style="left:309.8px;top:1034.4px;font-size:24.5px;color:#2b3250;font-weight:700;transform:scaleX(0.9315);transform-origin:0 0;">FILTER BY:</div>
<div class="t" style="left:465.5px;top:1034.2px;font-size:25.5px;color:#6b6b6b;transform:scaleX(1.0554);transform-origin:0 0;">Name</div>
<div class="t" style="left:900.2px;top:1034.4px;font-size:24.5px;color:#2b3250;font-weight:700;transform:scaleX(0.9803);transform-origin:0 0;">NAME:</div>
<div class="t" style="left:1017.4px;top:1034.2px;font-size:25.5px;color:#6b6b6b;transform:scaleX(0.9351);transform-origin:0 0;">Search Name</div>
<div class="t" style="left:1873.9px;top:1034.5px;font-size:28px;color:#fff;transform:scaleX(0.9772);transform-origin:0 0;">Clear Filter</div>
<div class="t" style="left:265.1px;top:1181.0px;font-size:27px;color:#555;font-weight:700;transform:scaleX(1.0195);transform-origin:0 0;">NAME</div>
<div class="t" style="left:641.1px;top:1181.0px;font-size:27px;color:#555;font-weight:700;transform:scaleX(0.9888);transform-origin:0 0;">VPC ID</div>
<div class="t" style="left:1082.9px;top:1181.0px;font-size:27px;color:#555;font-weight:700;">STATE</div>
<div class="t" style="left:1272.2px;top:1181.0px;font-size:27px;color:#555;font-weight:700;">CIDR IPV4</div>
<div class="t" style="left:1748.8px;top:1181.0px;font-size:27px;color:#555;font-weight:700;">CIDR IPV6</div>
<div class="t" style="left:1963.0px;top:1181.0px;font-size:27px;color:#555;font-weight:700;transform:scaleX(0.9623);transform-origin:0 0;">DEFAULT VPC</div>
<div class="t" style="left:2235.5px;top:1181.0px;font-size:27px;color:#555;font-weight:700;transform:scaleX(0.9903);transform-origin:0 0;">TAGS</div>
<div class="t" style="left:265.1px;top:1267.8px;font-size:28px;color:#1a1a1a;">bhuvana1</div>
<div class="t" style="left:641.1px;top:1267.8px;font-size:28px;color:#1a1a1a;transform:scaleX(1.0311);transform-origin:0 0;">vpc-084d3a56a7b98d1ff</div>
<div class="t" style="left:1082.9px;top:1267.8px;font-size:28px;color:#1a1a1a;transform:scaleX(1.0183);transform-origin:0 0;">available</div>
<div class="t" style="left:1272.1px;top:1267.8px;font-size:28px;color:#1a1a1a;transform:scaleX(1.0514);transform-origin:0 0;">30.0.0.0/24</div>
<div class="t" style="left:1962.8px;top:1267.8px;font-size:28px;color:#1a1a1a;transform:scaleX(1.0606);transform-origin:0 0;">No</div>
<div class="t" style="left:2233.5px;top:1267.8px;font-size:28px;color:#1a1a1a;transform:scaleX(1.0094);transform-origin:0 0;">Name:bhuvana1</div>
<div class="t" style="left:2764.7px;top:1267.8px;font-size:28px;color:#1e88e5;transform:scaleX(1.0626);transform-origin:0 0;">More Info</div>
<div class="t" style="left:265.1px;top:1345.8px;font-size:28px;color:#1a1a1a;transform:scaleX(1.0091);transform-origin:0 0;">Bhuvana-project-vpc</div>
<div class="t" style="left:641.1px;top:1345.8px;font-size:28px;color:#1a1a1a;transform:scaleX(1.0301);transform-origin:0 0;">vpc-003b0ab0eeff47a7c</div>
<div class="t" style="left:1082.9px;top:1345.8px;font-size:28px;color:#1a1a1a;transform:scaleX(1.0183);transform-origin:0 0;">available</div>
<div class="t" style="left:1271.1px;top:1345.8px;font-size:28px;color:#1a1a1a;transform:scaleX(1.0401);transform-origin:0 0;">162.31.0.0/16, 12.0.0.0/16</div>
<div class="t" style="left:1962.8px;top:1345.8px;font-size:28px;color:#1a1a1a;transform:scaleX(1.0606);transform-origin:0 0;">No</div>
<div class="t" style="left:2233.5px;top:1345.8px;font-size:28px;color:#1a1a1a;transform:scaleX(1.0083);transform-origin:0 0;">Name:Bhuvana-project-vpc</div>
<div class="t" style="left:2764.7px;top:1345.8px;font-size:28px;color:#1e88e5;transform:scaleX(1.0626);transform-origin:0 0;">More Info</div>
<div class="t" style="left:265.1px;top:1423.8px;font-size:28px;color:#1a1a1a;transform:scaleX(1.0167);transform-origin:0 0;">bhuvana2</div>
<div class="t" style="left:641.1px;top:1423.8px;font-size:28px;color:#1a1a1a;transform:scaleX(1.0261);transform-origin:0 0;">vpc-0f2c375434789615e</div>
<div class="t" style="left:1082.9px;top:1423.8px;font-size:28px;color:#1a1a1a;transform:scaleX(1.0183);transform-origin:0 0;">available</div>
<div class="t" style="left:1272.1px;top:1423.8px;font-size:28px;color:#1a1a1a;transform:scaleX(1.0512);transform-origin:0 0;">2.0.0.0/24</div>
<div class="t" style="left:1962.8px;top:1423.8px;font-size:28px;color:#1a1a1a;transform:scaleX(1.0606);transform-origin:0 0;">No</div>
<div class="t" style="left:2233.5px;top:1423.8px;font-size:28px;color:#1a1a1a;transform:scaleX(1.0149);transform-origin:0 0;">Name:bhuvana2</div>
<div class="t" style="left:2764.7px;top:1423.8px;font-size:28px;color:#1e88e5;transform:scaleX(1.0626);transform-origin:0 0;">More Info</div>
<div class="t" style="left:641.1px;top:1501.8px;font-size:28px;color:#1a1a1a;transform:scaleX(1.0057);transform-origin:0 0;">vpc-e8759781</div>
<div class="t" style="left:1082.9px;top:1501.8px;font-size:28px;color:#1a1a1a;transform:scaleX(1.0183);transform-origin:0 0;">available</div>
<div class="t" style="left:1271.1px;top:1501.8px;font-size:28px;color:#1a1a1a;transform:scaleX(1.0536);transform-origin:0 0;">172.31.0.0/16</div>
<div class="t" style="left:1963.9px;top:1501.8px;font-size:28px;color:#1a1a1a;transform:scaleX(1.0068);transform-origin:0 0;">Yes</div>
<div class="t" style="left:2764.7px;top:1501.8px;font-size:28px;color:#1e88e5;transform:scaleX(1.0626);transform-origin:0 0;">More Info</div>
<div class="t" style="left:2593.2px;top:1586.7px;font-size:28px;color:#111;transform:scaleX(1.0060);transform-origin:0 0;">Showing 1 to 4 of 4 VPCs</div>
</body></html>
